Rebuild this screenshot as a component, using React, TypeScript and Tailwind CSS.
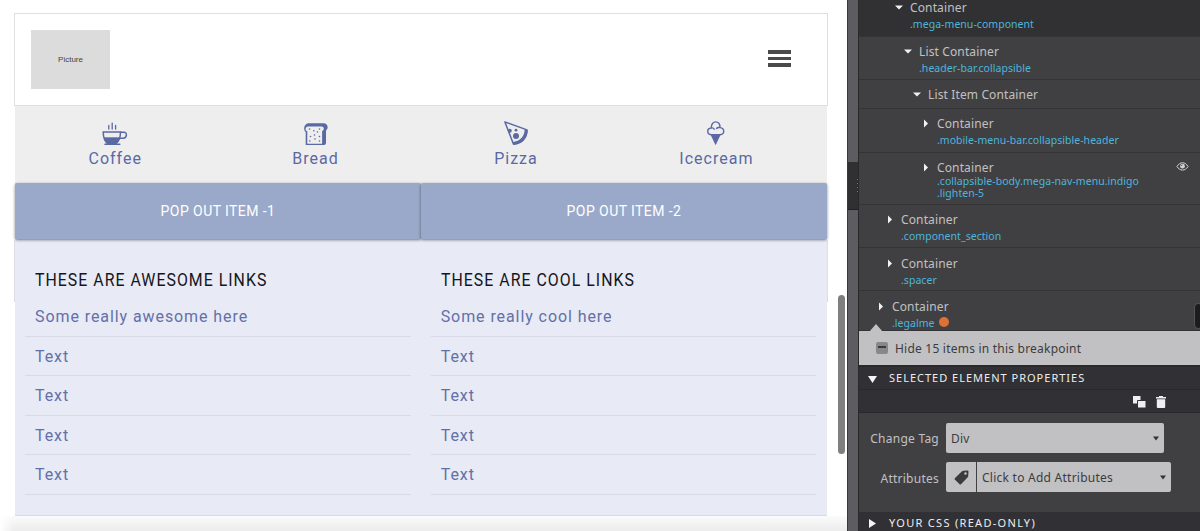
import type { ReactNode } from "react";

function CoffeeIcon() {
  return (
    <svg width="26" height="25" viewBox="0 0 26 25" fill="none" stroke="currentColor">
      <path d="M6.800 4.500v3.500M10.200 2.200v5.800M13.600 4.500v3.500" strokeWidth="1.300" strokeLinecap="round" />
      <path d="M1.200 10.900h17.300c0 5-1.600 9.400-5 11.900H6.400C3 20.800 1.200 16.400 1.200 10.900z" strokeWidth="1.500" />
      <path d="M2 16.500h16c-.8 3-2 5-4 6.200H6C4 22 2.800 20 2 16.500z" fill="currentColor" strokeWidth=".4" />
      <path d="M18.500 11.200h3.500c3.600 0 3 6-.8 6h-4" strokeWidth="1.500" />
      <path d="M3 23.300h14.800" strokeWidth="1.600" strokeLinecap="round" />
    </svg>
  );
}

function BreadIcon() {
  return (
    <svg width="26" height="25" viewBox="0 0 26 25" fill="none">
      <path
        d="M5 2.200h15.500c4.500 0 5.300 5.500 2.500 7.300v12c0 1.800-1 2.600-2.500 2.600H2.700V11C-.1 9.300 1 2.800 5 2.200z"
        fill="currentColor"
      />
      <path
        d="M5 5.400h13.600c2.800 0 2.800 3.800.5 4.700v12.600H4.300V10.200C1.600 9.200 2.200 5.700 5 5.400z"
        fill="#eeeeee"
      />
      <g fill="currentColor">
        <circle cx="6.500" cy="8" r=".8" />
        <circle cx="10.800" cy="9.800" r=".8" />
        <circle cx="16.500" cy="8" r=".8" />
        <circle cx="14.500" cy="11" r=".8" />
        <circle cx="11.500" cy="14" r=".8" />
        <circle cx="7.500" cy="15.500" r=".8" />
        <circle cx="16.500" cy="15.500" r=".8" />
        <circle cx="12" cy="18" r=".8" />
        <circle cx="6.800" cy="20" r=".8" />
        <circle cx="16.500" cy="20" r=".8" />
      </g>
    </svg>
  );
}

function PizzaIcon() {
  return (
    <svg width="26" height="25" viewBox="0 0 26 25" fill="none">
      <path d="M1.900 .900 24 8.900c.2 7.500-5 13.700-13.500 14.300z" stroke="currentColor" strokeWidth="1.500" strokeLinejoin="round" />
      <path d="M21.600 8.500 24.600 9c.2 8-6 14.500-14.200 14.500l-.6-2.600C17 20.500 21.700 15 21.600 8.500z" fill="currentColor" />
      <circle cx="13" cy="15" r="3" fill="currentColor" />
      <circle cx="6.800" cy="9.700" r="2" fill="currentColor" />
      <circle cx="13" cy="9.200" r="1.400" fill="currentColor" />
    </svg>
  );
}

function IcecreamIcon() {
  return (
    <svg width="26" height="25" viewBox="0 0 26 25" fill="none">
      <path
        d="M8.500 13.700C3.700 13.900 3.300 7.400 8.300 7 7.800-1 17.600-1.100 17 6.600c5 .5 5 7.300-.2 7.100zM8.300 7c1.500-.3 2.500.2 3 1.200M17 6.600c-1.600-.4-2.700-.200-3.400.9"
        stroke="currentColor"
        strokeWidth="1.400"
        strokeLinecap="round"
      />
      <path d="M7.500 13.500h10.200l-5.100 10.800z" fill="currentColor" />
    </svg>
  );
}

function EyeIcon() {
  return (
    <svg width="13" height="9" viewBox="0 0 12 9" fill="none">
      <path d="M.5 4.500C3.200-.5 8.800-.5 11.500 4.500 8.800 9.300 3.200 9.300.5 4.500z" stroke="#d0d0d2" />
      <circle cx="6" cy="4.200" r="2.400" fill="#d0d0d2" />
      <path d="M4.800 4c0-.7.500-1.200 1.200-1.200" stroke="#404043" strokeWidth=".7" />
    </svg>
  );
}

function Caret({ open }: { open: boolean }) {
  return (
    <svg width="8" height="9" viewBox="0 0 8 9" fill="#f2f2f2">
      {open ? <path d="M0 2.500h8L4 6.500z" /> : <path d="M2 .5v8l4-4z" />}
    </svg>
  );
}

function Category({ icon, label }: { icon: ReactNode; label: string }) {
  return (
    <div className="flex w-[200.4px] flex-col items-center">
      {icon}
      <span className="mt-px h-6 text-[16px] leading-6 tracking-[1px]">{label}</span>
    </div>
  );
}

function LinkColumn({ title, first }: { title: string; first: string }) {
  return (
    <div className="w-[405.700px] px-[10px] pt-[29px]">
      <h3 className="ml-[10px] h-[24px] w-max origin-left scale-x-[0.857] text-[18.500px] leading-6 tracking-[1.200px] whitespace-nowrap text-[#16161b]">
        {title}
      </h3>
      <ul className="mt-[5px] text-[16px] tracking-[0.920px] text-[#6370a8]">
        {[first, "Text", "Text", "Text", "Text"].map((t, i) => (
          <li key={i} className="h-[39.600px] border-b border-[#d8daea] pl-[10px] leading-[40px]">
            {t}
          </li>
        ))}
      </ul>
    </div>
  );
}

type RowProps = {
  indent: string;
  box: string;
  name: string;
  cls?: ReactNode;
  open?: boolean;
  eye?: boolean;
  tight?: boolean;
};

function TreeRow({ indent, box, name, cls, open = false, eye = false, tight = false }: RowProps) {
  return (
    <div className={`${box} ${indent} flex shrink-0 items-start border-b border-[#343437] pr-[11px]`}>
      <span className="mr-[7px] flex h-[16px] items-center">
        <Caret open={open} />
      </span>
      <div className="grow">
        <div className="h-[18px] text-[12px] leading-[18px] tracking-[0.130px] text-[#c0c0c2]">{name}</div>
        {cls && (
          <div
            className={`${tight ? "-mt-[2px]" : "mt-px"} text-[10.500px] leading-[12px] tracking-[0.040px] text-[#4db5dc]`}
          >
            {cls}
          </div>
        )}
      </div>
      {eye && (
        <span className="flex h-[15px] items-center">
          <EyeIcon />
        </span>
      )}
    </div>
  );
}

function Preview() {
  return (
    <main className="relative h-[531px] w-[847px] bg-white pl-[14px] font-['Roboto',sans-serif]">
      <div className="pt-[13px]">
        <header className="flex h-[93px] w-[813.500px] items-center justify-between border border-[#dfdfe1] pr-[36px] pl-4">
          <div className="flex h-[59px] w-[79px] items-center justify-center bg-[#dcdcdc] font-['Liberation_Sans',sans-serif] text-[8px] text-[#444444]">
            Picture
          </div>
          <div className="flex w-[23px] flex-col gap-[3px] pb-[2px]">
            <span className="h-[3.500px] bg-[#4a4a4a]" />
            <span className="h-[3.500px] bg-[#4a4a4a]" />
            <span className="h-[3.500px] bg-[#4a4a4a]" />
          </div>
        </header>
        <nav className="ml-px flex h-[77px] w-[812px] bg-[#eeeeee] pt-[15px] text-[#5a69a3]">
          <Category icon={<CoffeeIcon />} label="Coffee" />
          <Category icon={<BreadIcon />} label="Bread" />
          <Category icon={<PizzaIcon />} label="Pizza" />
          <Category icon={<IcecreamIcon />} label="Icecream" />
        </nav>
        <section className="ml-px h-[333px] w-[812px] border-b border-[#d9dae2] bg-[#e8eaf5]">
          <div className="flex h-[56px] text-[14px] tracking-[0.430px] text-white">
            <button className="flex-1 rounded-[2px] bg-[#9aa9c9] shadow-[0_1px_3px_rgba(0,0,0,0.5)]">
              POP OUT ITEM -1
            </button>
            <button className="flex-1 rounded-[2px] bg-[#9aa9c9] shadow-[0_1px_3px_rgba(0,0,0,0.5)]">
              POP OUT ITEM -2
            </button>
          </div>
          <div className="flex">
            <LinkColumn title="THESE ARE AWESOME LINKS" first="Some really awesome here" />
            <LinkColumn title="THESE ARE COOL LINKS" first="Some really cool here" />
          </div>
        </section>
      </div>
      <div className="absolute top-[240px] left-[14px] h-[62px] w-[814px] border-x border-[#dcdde5]" />
      <div className="absolute bottom-0 left-0 h-[15px] w-[847px] bg-linear-to-b from-[#fbfbfb] to-[#ececec]" />
      <div className="absolute bottom-0 left-0 h-[30px] w-[14px] bg-linear-to-r from-white to-transparent" />
      <div className="absolute top-[295px] left-[838px] h-[159px] w-[7px] rounded-full bg-[#7f7f7f]" />
    </main>
  );
}

function Divider() {
  return (
    <div className="flex h-[531px] w-[12px] flex-col border-r border-l border-r-[#29292b] border-l-[#38383b] bg-[#5d5d61]">
      <div className="mt-[162px] flex h-[48px] flex-col items-end justify-center gap-[3px] border-b border-[#202022] bg-[#303033]">
        <span className="size-px bg-[#77777a]" />
        <span className="size-px bg-[#77777a]" />
        <span className="size-px bg-[#77777a]" />
        <span className="size-px bg-[#77777a]" />
      </div>
    </div>
  );
}

function SelectArrow() {
  return (
    <svg width="6" height="5" viewBox="0 0 6 5" fill="#333335">
      <path d="M0 .5h6L3 4.500z" />
    </svg>
  );
}

function Inspector() {
  return (
    <aside className="relative flex h-[531px] w-[341px] flex-col overflow-hidden bg-[#404043] font-['Noto_Sans',sans-serif]">
      <TreeRow box="h-[37px] bg-[#313133] *:-mt-px" indent="pl-[36px]" name="Container" cls=".mega-menu-component" open />
      <TreeRow box="h-[43px] pt-[6px]" indent="pl-[45px]" name="List Container" cls=".header-bar.collapsible" open />
      <TreeRow box="h-[29px] pt-[6px]" indent="pl-[54px]" name="List Item Container" open />
      <TreeRow box="h-[44px] pt-[6px]" indent="pl-[63px]" name="Container" cls=".mobile-menu-bar.collapsible-header" />
      <TreeRow
        box="h-[52px] pt-[6px]"
        indent="pl-[63px]"
        name="Container"
        tight
        eye
        cls={
          <>
            .collapsible-body.mega-nav-menu.indigo
            <br />
            .lighten-5
          </>
        }
      />
      <TreeRow box="h-[43px] pt-[6px]" indent="pl-[27px]" name="Container" cls=".component_section" />
      <TreeRow box="h-[43px] pt-[7px]" indent="pl-[27px]" name="Container" cls=".spacer" />
      <TreeRow
        box="h-[40px] pt-[7px]"
        indent="pl-[18px]"
        name="Container"
        cls={
          <span className="flex items-center gap-[4px]">
            .legalme <span className="-mt-[3px] size-[10px] rounded-full bg-[#dc7138]" />
          </span>
        }
      />
      <div className="flex h-[36px] shrink-0 items-center border-b-2 border-[#29292b] bg-[#c1c1c3] pt-px pl-[17px] text-[12px] tracking-[0.220px] text-[#3c3c3e]">
        <span className="mt-[-2px] mr-[7px] flex size-[12px] justify-center rounded-[2px] bg-[#88888a] pt-[4px]">
          <span className="h-[2px] w-[8px] bg-[#3b3b3d]" />
        </span>
        Hide 15 items in this breakpoint
      </div>
      <div className="flex h-[23px] shrink-0 items-center border-b border-[#29292c] bg-[#313135] pt-px pl-[9px] text-[11px] tracking-[1px] text-[#ededed]">
        <svg className="mr-[12px]" width="9" height="8" viewBox="0 0 9 8" fill="#f5f5f5">
          <path d="M0 1h9L4.500 8z" />
        </svg>
        SELECTED ELEMENT PROPERTIES
      </div>
      <div className="flex h-[23px] shrink-0 items-center justify-end gap-[10px] border-b border-[#29292b] bg-[#313135] pt-[2px] pr-[34px]">
        <svg width="13" height="12" viewBox="0 0 13 12">
          <path d="M0 0h7.500v7.500H0z" fill="#efefef" />
          <path d="M4.500 4.500H13V12H4.500z" fill="#efefef" stroke="#313135" strokeWidth="1" />
        </svg>
        <svg width="10" height="12" viewBox="0 0 10 12" fill="#efefef">
          <path d="M0 1h3V0h4v1h3v1.500H0zM.8 3.200h8.400V11q0 1-1 1H1.800q-1 0-1-1z" />
        </svg>
      </div>
      <div className="flex h-[99px] shrink-0 flex-col gap-[9px] pt-[10px] text-[12px] tracking-[0.250px]">
        <div className="flex items-center">
          <label className="w-[80px] pt-[2px] text-right text-[#c0c0c2]">Change Tag</label>
          <div className="ml-[7px] flex h-[30px] w-[218px] items-center justify-between rounded-[2px] bg-[#c1c1c3] pt-px pr-[5px] pl-[5px] text-[#3c3c3e]">
            Div
            <SelectArrow />
          </div>
        </div>
        <div className="flex items-center">
          <label className="w-[80px] pt-[3px] text-right text-[#c0c0c2]">Attributes</label>
          <div className="ml-[7px] flex h-[30px] w-[30px] items-center justify-center rounded-l-[2px] bg-[#c1c1c3]">
            <svg width="15" height="15" viewBox="0 0 15 15" fill="#3b3b3e">
              <path
                fillRule="evenodd"
                d="M9.300.8 13.500.5q1 0 1 1L14.200 6q0 .7-.5 1.200L7 14.200q-.7.600-1.400 0L.8 9.600q-.6-.7 0-1.400L8 1.300Q8.600.8 9.300.8zM11.500 2.200a1.300 1.300 0 1 0 0 2.600 1.300 1.300 0 0 0 0-2.600z"
              />
            </svg>
          </div>
          <div className="ml-px flex h-[30px] w-[194px] items-center justify-between rounded-r-[2px] bg-[#c1c1c3] pr-[5px] pt-px pl-[5px] text-[#3c3c3e]">
            Click to Add Attributes
            <SelectArrow />
          </div>
        </div>
      </div>
      <div className="flex h-[22px] shrink-0 items-center bg-[#313135] pl-[10px] text-[11px] tracking-[1.300px] text-[#ededed]">
        <svg className="mr-[13px]" width="7" height="9" viewBox="0 0 7 9" fill="#f5f5f5">
          <path d="M0 0v9l7-4.500z" />
        </svg>
        YOUR CSS (READ-ONLY)
      </div>
      <svg className="absolute top-[324px] left-[10px]" width="14" height="8" viewBox="0 0 14 8" fill="#c1c1c3">
        <path d="M7 0l7 8H0z" />
      </svg>
      <div className="absolute top-[303px] -right-[3px] h-[26px] w-[9px] rounded-[4px] border border-[#555558] bg-[#1c1c1d]" />
    </aside>
  );
}

export default function App() {
  return (
    <div className="flex h-[531px] w-[1200px] overflow-hidden bg-white">
      <Preview />
      <Divider />
      <Inspector />
    </div>
  );
}
